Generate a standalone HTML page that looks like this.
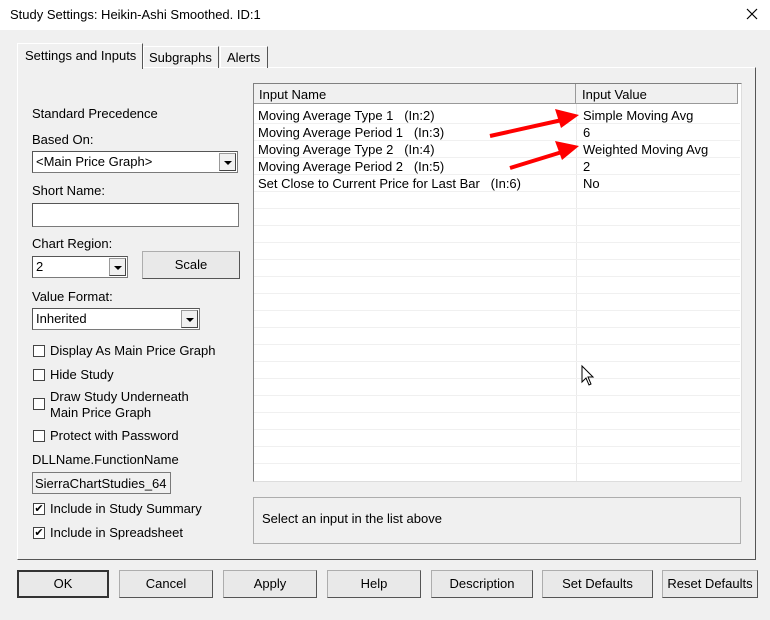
<!DOCTYPE html>
<html><head><style>
*{box-sizing:border-box;margin:0;padding:0}
body{width:770px;height:620px;background:#f0f0f0;font-family:"Liberation Sans",sans-serif;font-size:13px;color:#000;position:relative;overflow:hidden}
.a{position:absolute;white-space:nowrap}
.title{left:0;top:0;width:770px;height:30px;background:#fff}
.combo{position:absolute;background:#fff;border:1px solid #7a7a7a;border-top-color:#555;border-left-color:#555;padding:2px 3px;height:22px;line-height:16px}
.combo .dd{position:absolute;right:1px;top:1px;width:17px;height:18px;background:#f0f0f0;border:1px solid #999;border-right-color:#444;border-bottom-color:#444}
.combo .dd:after{content:"";position:absolute;left:4px;top:7px;border-left:4px solid transparent;border-right:4px solid transparent;border-top:4px solid #000}
.btn{position:absolute;background:#e9e9e9;border:1px solid #adadad;border-right-color:#555;border-bottom-color:#555;text-align:center;line-height:26px;height:28px}
.cb{position:absolute;width:12px;height:12px;border:1px solid #444;background:#fff}
.row{position:absolute;left:0;width:486px;height:17px;border-bottom:1px solid #f0f0f0;line-height:17px}
</style></head><body>
<div class="a title"></div>
<div class="a" style="left:10px;top:7px;font-size:13px">Study Settings: Heikin-Ashi Smoothed. ID:1</div>
<svg class="a" style="left:746px;top:8px" width="12" height="12"><path d="M1 1L11 11M11 1L1 11" stroke="#000" stroke-width="1.2"/></svg>

<div class="a" style="left:17px;top:67px;width:739px;height:493px;border:1px solid #fff;border-right-color:#555;border-bottom-color:#555"></div>
<div class="a" style="left:17px;top:43px;width:126px;height:26px;background:#f0f0f0;border:1px solid #fff;border-bottom:none;border-right-color:#555;padding:4px 0 0 7px">Settings and Inputs</div>
<div class="a" style="left:143px;top:46px;width:76px;height:22px;border:1px solid #fff;border-bottom:none;border-right-color:#555;padding:3px 0 0 5px">Subgraphs</div>
<div class="a" style="left:220px;top:46px;width:48px;height:22px;border:1px solid #fff;border-bottom:none;border-right-color:#555;padding:3px 0 0 6px">Alerts</div>

<div class="a" style="left:32px;top:106px">Standard Precedence</div>
<div class="a" style="left:32px;top:132px">Based On:</div>
<div class="combo" style="left:32px;top:151px;width:206px">&lt;Main Price Graph&gt;<div class="dd"></div></div>
<div class="a" style="left:32px;top:183px">Short Name:</div>
<div class="combo" style="left:32px;top:203px;width:207px;height:24px"></div>
<div class="a" style="left:32px;top:236px">Chart Region:</div>
<div class="combo" style="left:32px;top:256px;width:96px">2<div class="dd"></div></div>
<div class="btn" style="left:142px;top:251px;width:98px">Scale</div>
<div class="a" style="left:32px;top:289px">Value Format:</div>
<div class="combo" style="left:32px;top:308px;width:168px">Inherited<div class="dd"></div></div>
<div class="cb" style="left:33px;top:345px"></div><div class="a" style="left:50px;top:343px">Display As Main Price Graph</div>
<div class="cb" style="left:33px;top:369px"></div><div class="a" style="left:50px;top:367px">Hide Study</div>
<div class="cb" style="left:33px;top:398px"></div><div class="a" style="left:50px;top:389px;line-height:16px">Draw Study Underneath<br>Main Price Graph</div>
<div class="cb" style="left:33px;top:430px"></div><div class="a" style="left:50px;top:428px">Protect with Password</div>
<div class="a" style="left:32px;top:452px">DLLName.FunctionName</div>
<div class="a" style="left:32px;top:472px;width:139px;height:22px;border:1px solid #7a7a7a;padding:3px 2px;background:#f0f0f0">SierraChartStudies_64</div>
<div class="cb" style="left:33px;top:503px;font-size:11px;line-height:10px;text-align:center">✔</div><div class="a" style="left:50px;top:501px">Include in Study Summary</div>
<div class="cb" style="left:33px;top:527px;font-size:11px;line-height:10px;text-align:center">✔</div><div class="a" style="left:50px;top:525px">Include in Spreadsheet</div>

<div class="a" style="left:253px;top:83px;width:489px;height:399px;background:#fff;border:1px solid #808080;border-right-color:#ddd;border-bottom-color:#ddd">
 <div class="a" style="left:0;top:0;width:322px;height:20px;background:#f0f0f0;border-right:1px solid #999;border-bottom:1px solid #999;padding:3px 5px">Input Name</div>
 <div class="a" style="left:322px;top:0;width:162px;height:20px;background:#f0f0f0;border-right:1px solid #999;border-bottom:1px solid #999;padding:3px 6px">Input Value</div>
 <div class="a" style="left:322px;top:20px;width:1px;height:377px;background:#eaeaea"></div>
 <div class="row" style="top:23px"><span class="a" style="left:4px">Moving Average Type 1 &nbsp; (In:2)</span><span class="a" style="left:329px">Simple Moving Avg</span></div>
 <div class="row" style="top:40px"><span class="a" style="left:4px">Moving Average Period 1 &nbsp; (In:3)</span><span class="a" style="left:329px">6</span></div>
 <div class="row" style="top:57px"><span class="a" style="left:4px">Moving Average Type 2 &nbsp; (In:4)</span><span class="a" style="left:329px">Weighted Moving Avg</span></div>
 <div class="row" style="top:74px"><span class="a" style="left:4px">Moving Average Period 2 &nbsp; (In:5)</span><span class="a" style="left:329px">2</span></div>
 <div class="row" style="top:91px"><span class="a" style="left:4px">Set Close to Current Price for Last Bar &nbsp; (In:6)</span><span class="a" style="left:329px">No</span></div>
 <div class="row" style="top:108px"></div><div class="row" style="top:125px"></div><div class="row" style="top:142px"></div><div class="row" style="top:159px"></div><div class="row" style="top:176px"></div><div class="row" style="top:193px"></div><div class="row" style="top:210px"></div><div class="row" style="top:227px"></div><div class="row" style="top:244px"></div><div class="row" style="top:261px"></div><div class="row" style="top:278px"></div><div class="row" style="top:295px"></div><div class="row" style="top:312px"></div><div class="row" style="top:329px"></div><div class="row" style="top:346px"></div><div class="row" style="top:363px"></div>
</div>
<svg class="a" style="left:0;top:0" width="770" height="620">
<path d="M490 136L562 120" stroke="#f00" stroke-width="4"/><path d="M579 115L555 109L561 128Z" fill="#f00"/>
<path d="M510 168L562 152" stroke="#f00" stroke-width="4"/><path d="M579 146L555 141L562 160Z" fill="#f00"/>
<path d="M582 366L582 382L586 378L589 385L591 384L588 377L593 377Z" fill="#fff" stroke="#000" stroke-width="1"/>
</svg>
<div class="a" style="left:253px;top:497px;width:488px;height:47px;border:1px solid #adadad;padding:13px 8px">Select an input in the list above</div>

<div class="btn" style="left:17px;top:570px;width:92px;border:2px solid #333;line-height:24px">OK</div>
<div class="btn" style="left:119px;top:570px;width:94px">Cancel</div>
<div class="btn" style="left:223px;top:570px;width:94px">Apply</div>
<div class="btn" style="left:327px;top:570px;width:94px">Help</div>
<div class="btn" style="left:431px;top:570px;width:102px">Description</div>
<div class="btn" style="left:542px;top:570px;width:111px">Set Defaults</div>
<div class="btn" style="left:662px;top:570px;width:96px">Reset Defaults</div>
</body></html>
